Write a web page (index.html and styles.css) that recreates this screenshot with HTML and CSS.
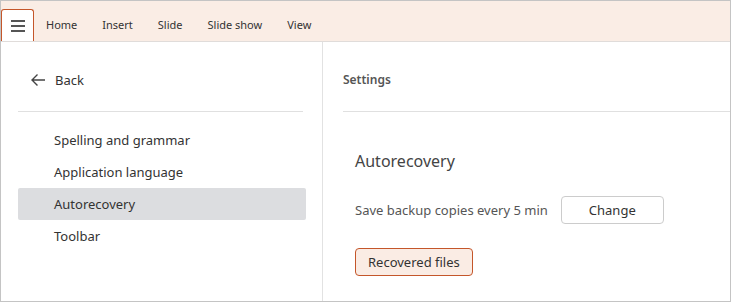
FILE: index.html
```html
<!DOCTYPE html>
<html>
<head>
<meta charset="utf-8">
<title>Settings</title>
<link rel="stylesheet" href="styles.css">
</head>
<body>
<div class="window">
  <div class="ribbon">
    <div class="menu_btn">
      <svg width="16" height="12" viewBox="0 0 16 12"><path d="M1 1h14M1 6h14M1 11h14" stroke="#555" stroke-width="1.8" fill="none"/></svg>
    </div>
    <ul class="tabs">
      <li>Home</li>
      <li>Insert</li>
      <li>Slide</li>
      <li>Slide show</li>
      <li>View</li>
    </ul>
  </div>
  <div class="main">
    <div class="side">
      <div class="back">
        <svg width="16" height="14" viewBox="0 0 16 14"><path d="M15 7H2M7.5 1.5L2 7l5.5 5.5" stroke="#444" stroke-width="1.4" fill="none"/></svg>
        <span>Back</span>
      </div>
      <div class="side_line"></div>
      <ul class="side_list">
        <li>Spelling and grammar</li>
        <li>Application language</li>
        <li class="current">Autorecovery</li>
        <li>Toolbar</li>
      </ul>
    </div>
    <div class="content">
      <div class="content_title">Settings</div>
      <div class="content_line"></div>
      <div class="section">
        <h2>Autorecovery</h2>
        <div class="row">
          <span class="label">Save backup copies every 5 min</span>
          <button class="btn">Change</button>
        </div>
        <button class="btn btn_accent">Recovered files</button>
      </div>
    </div>
  </div>
</div>
</body>
</html>
```
FILE: styles.css
```css
body,ul,li,h2{margin:0;padding:0;}
li{list-style:none;}
body{font-family:"Noto Sans","Open Sans",sans-serif;color:#333;background:#fff;}
.window{width:731px;height:302px;box-sizing:border-box;border:1px solid #c4c4c4;display:flex;flex-direction:column;overflow:hidden;}
.ribbon{height:40px;background:#faede5;border-bottom:1px solid #e0dcda;display:flex;align-items:flex-end;flex-shrink:0;}
.menu_btn{width:31px;height:31px;background:#fff;border:1px solid #c4562a;border-bottom:none;border-radius:3px 3px 0 0;display:flex;align-items:center;justify-content:center;}
.tabs{display:flex;height:32px;align-items:center;padding-left:0;}
.tabs li{font-size:11px;padding:0 12.5px;color:#333;line-height:32px;}
.tabs li:first-child{padding-left:12px;}
.main{flex:1;display:flex;}
.side{width:304px;padding-left:17px;border-right:1px solid #e2e2e2;}
.back{height:32px;margin:22px 0 15px;display:flex;align-items:center;font-size:13px;}
.back svg{margin:0 9px 0 12px;}
.side_line{width:285px;height:1px;background:#e0e0e0;}
.side_list{margin-top:12px;width:288px;}
.side_list li{height:32px;line-height:33px;padding-left:36px;font-size:13px;border-radius:2px;}
.side_list .current{background:#dcdde0;}
.content{flex:1;padding-left:20px;}
.content_title{height:32px;line-height:32px;margin:22px 0 15px;font-size:12px;font-weight:600;color:#555;}
.content_line{height:1px;background:#e0e0e0;}
.section{padding-left:12px;}
.section h2{font-size:16px;font-weight:400;color:#444;line-height:24px;margin-top:37px;}
.row{display:flex;align-items:center;margin-top:23px;}
.label{font-size:13px;color:#555;}
.btn{font-family:inherit;font-size:13px;color:#333;background:#fff;border:1px solid #ccc;border-radius:4px;height:28px;padding:0 12px;}
.row .btn{width:103px;margin-left:13px;}
.btn_accent{margin-top:24px;background:#faece4;border-color:#c4562a;}
```
